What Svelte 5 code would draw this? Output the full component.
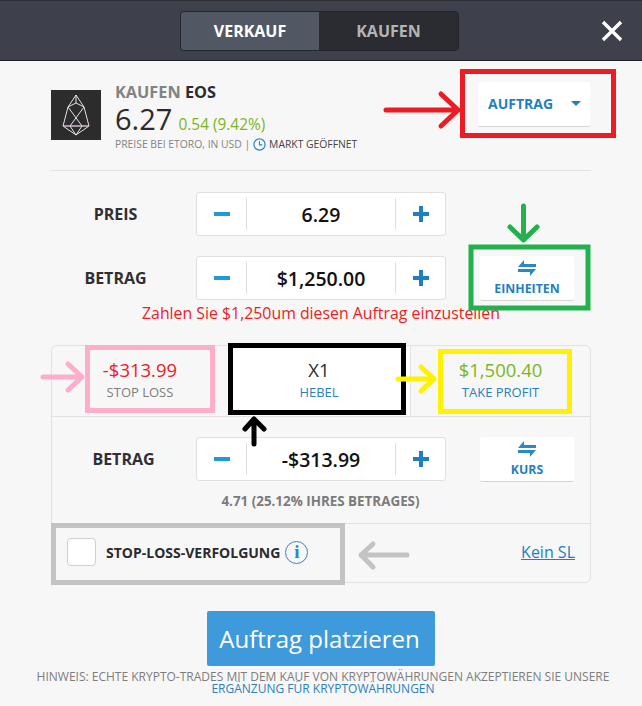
<script>
  const arrows = [
    { color: '#ed1c24', d: 'M386 110H458M441 94L458 110L441 126' },
    { color: '#22b14c', d: 'M523.5 206V240M510 227L523.5 240L537 227' },
    { color: '#ffaec9', d: 'M43 377H82M68 364L82 377L68 390' },
    { color: '#fff200', d: 'M398 379H434M421 367L434 379L421 391' },
    { color: '#000000', d: 'M254 444V419M245 429L254 419L264 429' },
    { color: '#c3c3c3', d: 'M407 555H361M373 544L361 555L373 567' }
  ];
  const frames = [
    { color: '#ed1c24', x: 462.5, y: 71.5, w: 151, h: 64 },
    { color: '#22b14c', x: 471, y: 247, w: 117, h: 61 },
    { color: '#ffaec9', x: 87.5, y: 347.5, w: 125, h: 63 },
    { color: '#000000', x: 230.5, y: 345.5, w: 173, h: 67 },
    { color: '#fff200', x: 440.5, y: 351.5, w: 129, h: 60 },
    { color: '#c3c3c3', x: 53.5, y: 525.5, w: 289, h: 57 }
  ];
</script>

<div class="page">
  <header class="top">
    <div class="toggle">
      <div class="tab active">VERKAUF</div>
      <div class="tab">KAUFEN</div>
    </div>
    <svg class="close" width="22" height="22" viewBox="0 0 22 22">
      <path d="M2 2L20 20M20 2L2 20" stroke="#fff" stroke-width="3.4" />
    </svg>
  </header>

  <main class="content">
    <section class="instrument">
      <div class="logo">
        <svg width="50" height="50" viewBox="0 0 50 50" fill="none" stroke="#e6e2e8" stroke-width="1">
          <path d="M25 5L33 17L38 36L25 45L12 36L17 17Z" />
          <path d="M25 5V13M17 17L25 13L33 17M17 17L31 36L25 45L19 36L33 17" />
          <path d="M12 36H38" stroke="#d8c4d6" stroke-width="1.4" />
        </svg>
      </div>
      <div class="info">
        <div class="name"><span class="grey">KAUFEN</span> EOS</div>
        <div class="quote"><span class="rate">6.27</span> <span class="change">0.54 (9.42%)</span></div>
        <div class="meta">
          <span class="grey">PREISE BEI ETORO, IN USD |</span>
          <svg width="13" height="13" viewBox="0 0 13 13" fill="none" stroke="#2a87c8" stroke-width="1.2">
            <circle cx="6.5" cy="6.5" r="5.6" />
            <path d="M6.5 3.2V6.8H9.4" />
          </svg>
          <span>MARKT GEÖFFNET</span>
        </div>
      </div>
      <button class="order"><span class="order-text">AUFTRAG</span> <span class="caret"></span></button>
    </section>

    <section class="form">
      <div class="row">
        <div class="label">PREIS</div>
        <div class="stepper"><span class="minus"></span><b>6.29</b><span class="plus"></span></div>
      </div>
      <div class="row second">
        <div class="label">BETRAG</div>
        <div class="stepper"><span class="minus"></span><b>$1,250.00</b><span class="plus"></span></div>
        <button class="swap">
          <svg width="18" height="16" viewBox="0 0 18 16" fill="#2a87c8"><path d="M6 0V4H18V7H0ZM0 9H18L12 16V12H0Z" /></svg>
          EINHEITEN
        </button>
      </div>
      <p class="error">Zahlen Sie $1,250um diesen Auftrag einzustellen</p>
    </section>

    <section class="card">
      <div class="tabs">
        <div class="cell">
          <span class="big loss">-$313.99</span>
          <span class="small">STOP LOSS</span>
        </div>
        <div class="cell lever">
          <span class="big">X1</span>
          <span class="small link">HEBEL</span>
        </div>
        <div class="cell">
          <span class="big profit">$1,500.40</span>
          <span class="small link">TAKE PROFIT</span>
        </div>
      </div>
      <div class="row amount">
        <div class="label">BETRAG</div>
        <div class="stepper"><span class="minus"></span><b>-$313.99</b><span class="plus"></span></div>
        <button class="swap">
          <svg width="18" height="16" viewBox="0 0 18 16" fill="#2a87c8"><path d="M6 0V4H18V7H0ZM0 9H18L12 16V12H0Z" /></svg>
          KURS
        </button>
      </div>
      <div class="hint">4.71 (25.12% IHRES BETRAGES)</div>
      <div class="trailing">
        <span class="check"></span>
        <span class="trail-label">STOP-LOSS-VERFOLGUNG</span>
        <span class="i">i</span>
        <span class="none">Kein SL</span>
      </div>
    </section>

    <button class="submit">Auftrag platzieren</button>
    <p class="note">
      HINWEIS: ECHTE KRYPTO-TRADES MIT DEM KAUF VON KRYPTOWÄHRUNGEN AKZEPTIEREN SIE UNSERE
      <span>ERGÄNZUNG FÜR KRYPTOWÄHRUNGEN</span>
    </p>
  </main>

  <!-- annotations drawn on top of the screenshot -->
  <svg class="marks" width="642" height="706" viewBox="0 0 642 706" fill="none">
    {#each frames as f}
      <rect x={f.x} y={f.y} width={f.w} height={f.h} stroke={f.color} stroke-width="5" />
    {/each}
    {#each arrows as a}
      <path d={a.d} stroke={a.color} stroke-width="5" stroke-linecap="round" stroke-linejoin="round" />
    {/each}
  </svg>
</div>

<style>
  :global(body) {
    margin: 0;
    background: #f7f7f7;
  }

  .page {
    position: relative;
    width: 642px;
    height: 706px;
    overflow: hidden;
    font-family: "Open Sans", sans-serif;
    color: #2b2b2f;
  }

  button {
    font-family: inherit;
    border: 0;
    padding: 0;
  }

  .top {
    display: flex;
    align-items: center;
    box-sizing: border-box;
    height: 61px;
    padding: 0 19px 0 180px;
    background: #3e404b;
    border-top: 1px solid #2e2f35;
    border-bottom: 1px solid #1f2024;
  }

  .toggle {
    display: flex;
    width: 279px;
    height: 40px;
    box-sizing: border-box;
    border: 1px solid #25262b;
    border-radius: 4px;
    background: #2b2c31;
    overflow: hidden;
  }

  .tab {
    flex: 1;
    display: flex;
    align-items: center;
    justify-content: center;
    font-size: 16px;
    font-weight: 700;
    color: #b4b4b6;
  }

  .tab.active {
    flex: 0 0 138px;
    background: #525764;
    color: #fff;
  }

  .close {
    margin-left: auto;
  }

  .content {
    padding: 0 51px;
  }

  .instrument {
    display: flex;
    align-items: flex-start;
    height: 109px;
    border-bottom: 1px solid #e2e2e2;
  }

  .logo {
    width: 50px;
    height: 50px;
    margin-top: 29px;
    background: #2c2c2c;
    flex: none;
  }

  .logo svg {
    display: block;
  }

  .info {
    margin: 21px 0 0 14px;
  }

  .name {
    font-size: 16.3px;
    line-height: 20px;
    font-weight: 700;
  }

  .grey {
    color: #838383;
  }

  .quote {
    line-height: 32px;
    height: 32px;
    margin-top: 1px;
  }

  .rate {
    font-size: 29px;
  }

  .change {
    font-size: 15.4px;
    color: #7cb51e;
    margin-left: 2px;
  }

  .meta {
    display: flex;
    align-items: center;
    gap: 3px;
    margin-top: 2px;
    font-size: 10.35px;
    line-height: 14px;
    color: #444;
  }

  .order {
    display: flex;
    align-items: center;
    justify-content: space-between;
    box-sizing: border-box;
    width: 112px;
    height: 45px;
    margin: 21px 1px 0 auto;
    padding: 0 9px 2px 10px;
    background: #fff;
    border-bottom: 1px solid #d5d5d5;
    border-radius: 2px;
    font-size: 14px;
    font-weight: 700;
    color: #1f7fc2;
  }

  .caret {
    width: 0;
    height: 0;
    border: 5px solid transparent;
    border-top: 5px solid #1f7fc2;
    border-bottom: 0;
  }

  .form {
    padding-top: 21px;
  }

  .row {
    display: flex;
    align-items: center;
  }

  .row.second {
    margin-top: 20px;
    height: 44px;
  }

  .label {
    width: 145px;
    padding-right: 16px;
    box-sizing: border-box;
    text-align: center;
    font-size: 16px;
    font-weight: 700;
    color: #2f2f33;
  }

  .stepper {
    display: flex;
    align-items: center;
    box-sizing: border-box;
    width: 250px;
    height: 44px;
    background: #fff;
    border: 1px solid #e0e0e0;
    border-radius: 3px;
  }

  .stepper b {
    flex: 1;
    align-self: stretch;
    display: flex;
    align-items: center;
    justify-content: center;
    margin: 5px 0;
    border-left: 1px solid #dedede;
    border-right: 1px solid #dedede;
    font-size: 19.5px;
    font-weight: 600;
    color: #111;
  }

  .minus,
  .plus {
    position: relative;
    flex: 0 0 49px;
    height: 16px;
  }

  .minus::before,
  .plus::before {
    content: '';
    position: absolute;
    left: 17px;
    top: 6px;
    width: 16px;
    height: 4px;
    background: #1e9ad6;
  }

  .plus::before {
    background: #1f7fc2;
  }

  .plus::after {
    content: '';
    position: absolute;
    left: 23px;
    top: 0;
    width: 4px;
    height: 16px;
    background: #1f7fc2;
  }

  .swap {
    display: flex;
    flex-direction: column;
    align-items: center;
    justify-content: center;
    gap: 6px;
    box-sizing: border-box;
    width: 94px;
    height: 45px;
    margin-left: 34px;
    background: #fff;
    border-bottom: 1px solid #d5d5d5;
    border-radius: 2px;
    font-size: 12.3px;
    line-height: 14px;
    font-weight: 700;
    color: #1f7fc2;
  }

  .error {
    margin: 3px 0 0;
    text-align: center;
    font-size: 15.85px;
    line-height: 20px;
    color: #ed2024;
  }

  .card {
    box-sizing: border-box;
    height: 238px;
    margin-top: 22px;
    border: 1px solid #e2e2e2;
    border-radius: 6px;
  }

  .tabs {
    display: grid;
    grid-template-columns: 176px 183px 1fr;
    height: 70px;
    border-bottom: 1px solid #e2e2e2;
  }

  .cell {
    display: flex;
    flex-direction: column;
    align-items: center;
    padding-top: 12px;
    box-sizing: border-box;
  }

  .cell.lever {
    background: #fff;
    border-right: 1px solid #e2e2e2;
  }

  .big {
    font-size: 18.5px;
    line-height: 24px;
  }

  .small {
    margin-top: 1px;
    font-size: 13px;
    line-height: 18px;
    color: #7d7d7d;
  }

  .link {
    color: #2a7fbd;
  }

  .loss {
    color: #ed2024;
  }

  .profit {
    color: #7cb51e;
  }

  .amount {
    margin-top: 20px;
    height: 44px;
    margin-left: -1px;
  }

  .amount .label {
    padding-right: 0;
  }

  .hint {
    margin-top: 11px;
    text-align: center;
    padding-right: 1px;
    font-size: 13.4px;
    line-height: 18px;
    font-weight: 700;
    color: #7b7b7b;
  }

  .trailing {
    display: flex;
    align-items: center;
    box-sizing: border-box;
    height: 59px;
    margin-top: 13px;
    padding: 0 15px 2px 15px;
    border-top: 1px solid #e2e2e2;
  }

  .check {
    box-sizing: border-box;
    width: 29px;
    height: 28px;
    background: #fff;
    border: 1px solid #cfcfcf;
    border-radius: 4px;
  }

  .trail-label {
    margin-left: 10px;
    font-size: 14px;
    font-weight: 700;
    color: #2b2b2f;
  }

  .i {
    display: flex;
    align-items: center;
    justify-content: center;
    box-sizing: border-box;
    width: 23px;
    height: 23px;
    margin-left: 5px;
    border: 1.3px solid #2a87c8;
    border-radius: 50%;
    font-family: "Liberation Serif", serif;
    font-size: 19px;
    font-weight: 700;
    color: #2a87c8;
  }

  .none {
    margin-left: auto;
    font-size: 16px;
    color: #1f7fc2;
    text-decoration: underline;
  }

  .submit {
    display: block;
    width: 228px;
    height: 55px;
    margin: 28px auto 0;
    padding-right: 3px;
    background: #3f9adb;
    border-radius: 2px;
    font-size: 24px;
    color: #fff;
  }

  .note {
    margin: 5px -20px 0;
    padding-left: 4px;
    text-align: center;
    font-size: 12px;
    line-height: 12px;
    color: #7d7d7d;
  }

  .note span {
    display: block;
    color: #2a7fbd;
  }

  .marks {
    position: absolute;
    left: 0;
    top: 0;
    pointer-events: none;
  }
</style>
